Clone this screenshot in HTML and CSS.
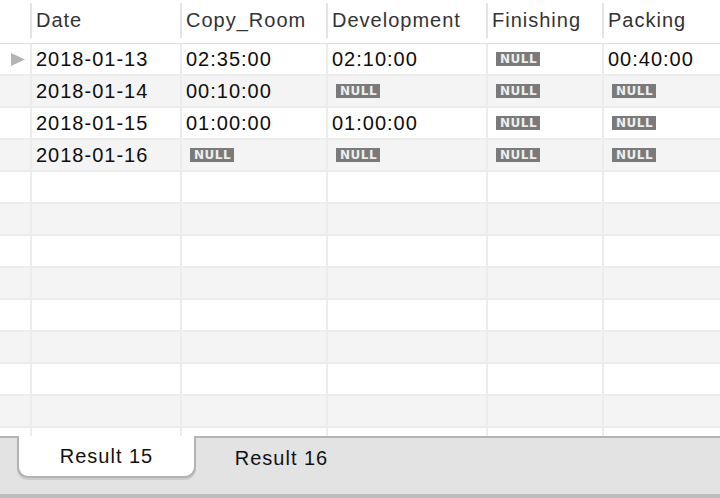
FILE: index.html
```html
<!DOCTYPE html>
<html>
<head>
<meta charset="utf-8">
<link rel="stylesheet" href="styles.css">
</head>
<body>
<div class="app">
  <div class="grid">
    <div class="row head">
      <div class="hc"></div>
      <div class="hc">Date</div>
      <div class="hc">Copy_Room</div>
      <div class="hc">Development</div>
      <div class="hc">Finishing</div>
      <div class="hc last">Packing</div>
    </div>
    <div class="row">
      <div class="c ind"><svg width="14" height="13" viewBox="0 0 14 13"><polygon points="0,0 14,6.5 0,13" fill="#b4b4b4"/></svg></div>
      <div class="c">2018-01-13</div>
      <div class="c">02:35:00</div>
      <div class="c">02:10:00</div>
      <div class="c"><span class="null">NULL</span></div>
      <div class="c last">00:40:00</div>
    </div>
    <div class="row alt">
      <div class="c ind"></div>
      <div class="c">2018-01-14</div>
      <div class="c">00:10:00</div>
      <div class="c"><span class="null">NULL</span></div>
      <div class="c"><span class="null">NULL</span></div>
      <div class="c last"><span class="null">NULL</span></div>
    </div>
    <div class="row">
      <div class="c ind"></div>
      <div class="c">2018-01-15</div>
      <div class="c">01:00:00</div>
      <div class="c">01:00:00</div>
      <div class="c"><span class="null">NULL</span></div>
      <div class="c last"><span class="null">NULL</span></div>
    </div>
    <div class="row alt">
      <div class="c ind"></div>
      <div class="c">2018-01-16</div>
      <div class="c"><span class="null">NULL</span></div>
      <div class="c"><span class="null">NULL</span></div>
      <div class="c"><span class="null">NULL</span></div>
      <div class="c last"><span class="null">NULL</span></div>
    </div>
    <div class="row"><div class="c"></div><div class="c"></div><div class="c"></div><div class="c"></div><div class="c"></div><div class="c last"></div></div>
    <div class="row alt"><div class="c"></div><div class="c"></div><div class="c"></div><div class="c"></div><div class="c"></div><div class="c last"></div></div>
    <div class="row"><div class="c"></div><div class="c"></div><div class="c"></div><div class="c"></div><div class="c"></div><div class="c last"></div></div>
    <div class="row alt"><div class="c"></div><div class="c"></div><div class="c"></div><div class="c"></div><div class="c"></div><div class="c last"></div></div>
    <div class="row"><div class="c"></div><div class="c"></div><div class="c"></div><div class="c"></div><div class="c"></div><div class="c last"></div></div>
    <div class="row alt"><div class="c"></div><div class="c"></div><div class="c"></div><div class="c"></div><div class="c"></div><div class="c last"></div></div>
    <div class="row"><div class="c"></div><div class="c"></div><div class="c"></div><div class="c"></div><div class="c"></div><div class="c last"></div></div>
    <div class="row alt"><div class="c"></div><div class="c"></div><div class="c"></div><div class="c"></div><div class="c"></div><div class="c last"></div></div>
    <div class="row"><div class="c"></div><div class="c"></div><div class="c"></div><div class="c"></div><div class="c"></div><div class="c last"></div></div>
  </div>
  <div class="tabbar">
    <div class="tab active">Result 15</div>
    <div class="tab">Result 16</div>
  </div>
</div>
</body>
</html>
```

FILE: styles.css
```css
html, body {
  margin: 0;
  padding: 0;
  background: #ffffff;
}
.app {
  width: 720px;
  height: 498px;
  overflow: hidden;
  display: flex;
  flex-direction: column;
  font-family: "Liberation Sans", Arial, sans-serif;
  font-size: 20px;
  letter-spacing: 1px;
}
.grid {
  height: 436px;
  overflow: hidden;
  flex: none;
}
.row {
  display: grid;
  grid-template-columns: 32px 150px 146px 160px 116px 1fr;
  height: 32px;
  box-sizing: border-box;
  border-bottom: 2px solid #ececec;
  background: #ffffff;
}
.row.alt {
  background: #f4f4f4;
}
.row.head {
  height: 44px;
  border-bottom: 1px solid #dedede;
  align-items: start;
  padding-top: 3px;
  background: #ffffff;
}
.hc {
  height: 35px;
  box-sizing: border-box;
  border-right: 2px solid #e4e4e4;
  padding-left: 4px;
  display: flex;
  align-items: center;
  color: #333333;
  white-space: nowrap;
}
.c {
  box-sizing: border-box;
  border-right: 2px solid #ececec;
  padding-left: 4px;
  display: flex;
  align-items: center;
  color: #0d0d0d;
  white-space: nowrap;
}
.hc.last, .c.last {
  border-right: none;
}
.c.ind {
  padding-left: 11px;
}
.null {
  display: inline-block;
  width: 44px;
  height: 14px;
  box-sizing: border-box;
  margin-left: 4px;
  padding-left: 4px;
  background: #7a7a7a;
  color: #eeeeee;
  font-family: "DejaVu Sans", sans-serif;
  font-size: 12px;
  font-weight: bold;
  letter-spacing: 0.5px;
  line-height: 14px;
  text-align: left;
}
.tabbar {
  flex: none;
  height: 62px;
  box-sizing: border-box;
  background: #e3e3e3;
  border-top: 2px solid #b5b5b5;
  border-bottom: 4px solid #bdbdbd;
  display: flex;
  padding-left: 17px;
  align-items: flex-start;
}
.tab {
  height: 40px;
  display: flex;
  align-items: center;
  justify-content: center;
  color: #111111;
  box-sizing: border-box;
}
.tab.active {
  width: 179px;
  height: 42px;
  margin-top: -2px;
  background: #ffffff;
  border: 2px solid #b3b3b3;
  border-top: none;
  border-radius: 0 0 11px 11px;
  box-shadow: 0 2px 0 #cdcdcd;
}
.tab:not(.active) {
  width: 171px;
}
```
